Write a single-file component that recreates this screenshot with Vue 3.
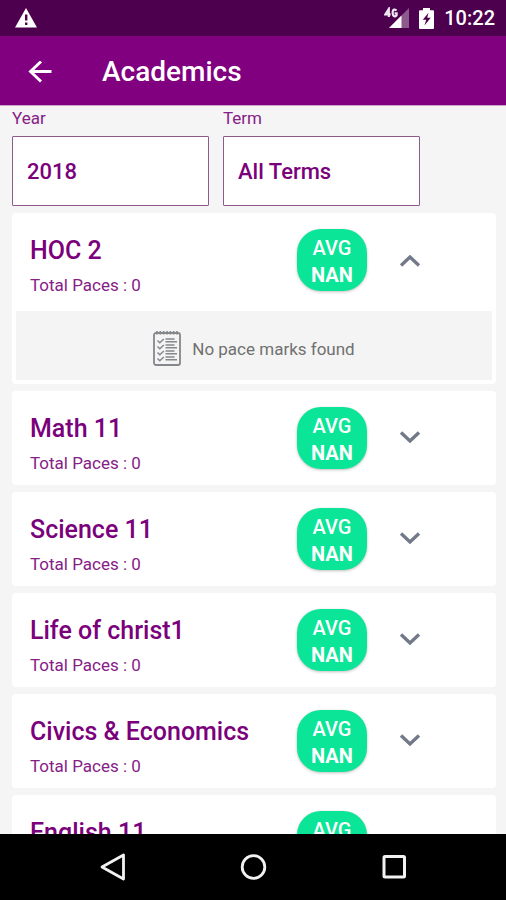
<script setup>
import { ref } from 'vue'

const year = ref('2018')
const term = ref('All Terms')
const openSubject = ref('HOC 2')

const subjects = [
  { name: 'HOC 2', paces: 0 },
  { name: 'Math 11', paces: 0 },
  { name: 'Science 11', paces: 0 },
  { name: 'Life of christ1', paces: 0 },
  { name: 'Civics & Economics', paces: 0 },
  { name: 'English 11', paces: 0 },
]

const noteLines = [9, 15, 21, 27]

function toggle(name) {
  openSubject.value = openSubject.value === name ? '' : name
}
</script>

<template>
  <div class="screen">
    <div class="status-bar">
      <svg class="warning" width="22" height="20" viewBox="0 0 22 20" aria-hidden="true">
        <path d="M11 0 22 19.500H0Z" fill="#fff" />
        <path d="M10 6.500h2.400v6H10zM10 14.500h2.400v2.400H10z" fill="#4d004d" />
      </svg>
      <div class="status-right">
        <svg width="25" height="22" viewBox="0 0 25 22" aria-hidden="true">
          <path d="M25 1V21H5Z" fill="#8d5a8d" />
          <path d="M17.500 8.500V21H5Z" fill="#fff" />
          <g fill="none" stroke="#f0e6f0" stroke-width="2.200">
            <path d="M4.800 10V2L1.400 7.300H6.700" />
            <path d="M12.400 3.600C11.400 1.900 8.600 2 8.600 5.800s3 4.300 4 2.500V6.300h-2" />
          </g>
        </svg>
        <svg width="15" height="21" viewBox="0 0 15 21" aria-hidden="true">
          <path d="M4 0h7v2.200H14q1 0 1 1V20q0 1-1 1H1q-1 0-1-1V3.200q0-1 1-1h3Z" fill="#fff" />
          <path d="M9.500 4.800 3.800 11.800h3.400L5.500 17.500l6.200-7.700H8.200Z" fill="#4d004d" />
        </svg>
        <span class="clock">10:22</span>
      </div>
    </div>

    <header class="app-bar">
      <button class="back" type="button" aria-label="Back">
        <svg width="24" height="22" viewBox="0 0 24 22" aria-hidden="true">
          <path d="M23.500 10.500H2.500M13 0.500 2.500 10.500 13 20.500" fill="none" stroke="#fff" stroke-width="2.900" />
        </svg>
      </button>
      <h1>Academics</h1>
    </header>

    <main class="content">
      <form class="filters">
        <div class="field">
          <label for="year">Year</label>
          <select id="year" v-model="year">
            <option>2018</option>
          </select>
        </div>
        <div class="field">
          <label for="term">Term</label>
          <select id="term" v-model="term">
            <option>All Terms</option>
          </select>
        </div>
      </form>

      <section class="subjects">
        <article v-for="s in subjects" :key="s.name" class="card">
          <div class="card-head">
            <div class="info">
              <h2>{{ s.name }}</h2>
              <p>Total Paces : {{ s.paces }}</p>
            </div>
            <div class="average">
              <span>AVG</span>
              <strong>NAN</strong>
            </div>
            <button
              class="toggle"
              type="button"
              :aria-label="s.name"
              :aria-expanded="openSubject === s.name"
              @click="toggle(s.name)"
            >
              <svg width="22" height="14" viewBox="0 0 22 14" aria-hidden="true">
                <path
                  :d="openSubject === s.name ? 'M2 12.500 11 4l9 8.500' : 'M2 1.500 11 10l9-8.500'"
                  fill="none"
                  stroke="#727988"
                  stroke-width="3.400"
                />
              </svg>
            </button>
          </div>
          <div v-if="openSubject === s.name" class="empty">
            <svg width="28" height="38" viewBox="0 0 28 38" fill="none" stroke="#84888c" aria-hidden="true">
              <rect x="1" y="3" width="26" height="32" rx="2" stroke-width="1.800" />
              <path d="M4 1v3.500M7.300 1v3.500M10.600 1v3.500M14 1v3.500M17.300 1v3.500M20.600 1v3.500M24 1v3.500" stroke-width="1.700" />
              <g v-for="y in noteLines" :key="y" stroke-width="1.500">
                <path :d="`M4.500 ${y + 1.5}l2.300 2.200 4-3.700`" />
                <path :d="`M12.500 ${y}h9M12.500 ${y + 2.7}h11.500`" />
              </g>
            </svg>
            <span>No pace marks found</span>
          </div>
        </article>
      </section>
    </main>

    <nav class="nav-bar">
      <button type="button" aria-label="Back">
        <svg width="28" height="28" viewBox="0 0 28 28" aria-hidden="true">
          <path d="M24.500 2V26L3 14Z" fill="none" stroke="#f2f2f2" stroke-width="2.800" stroke-linejoin="round" />
        </svg>
      </button>
      <button type="button" aria-label="Home">
        <svg width="28" height="28" viewBox="0 0 28 28" aria-hidden="true">
          <circle cx="14.500" cy="14" r="11.300" fill="none" stroke="#f2f2f2" stroke-width="2.800" />
        </svg>
      </button>
      <button type="button" aria-label="Recent apps">
        <svg width="28" height="28" viewBox="0 0 28 28" aria-hidden="true">
          <rect x="5" y="3.500" width="20.500" height="20.500" rx="1" fill="none" stroke="#f2f2f2" stroke-width="3" />
        </svg>
      </button>
    </nav>
  </div>
</template>

<style>
body {
  margin: 0;
}
</style>

<style scoped>
* {
  box-sizing: border-box;
}

.screen {
  display: flex;
  flex-direction: column;
  height: 100vh;
  overflow: hidden;
  background: #f5f5f5;
  color: #7b007b;
  font-family: Roboto, sans-serif;
}

button {
  padding: 0;
  border: 0;
  background: none;
  cursor: pointer;
}

svg {
  display: block;
}

h1,
h2,
p {
  margin: 0;
  font-weight: 500;
}

.status-bar {
  display: flex;
  flex: none;
  align-items: center;
  justify-content: space-between;
  height: 36px;
  padding: 0 11px 0 15px;
  background: #4d004d;
  color: #fff;
}

.status-right {
  display: flex;
  align-items: center;
  gap: 10px;
}

.clock {
  font-size: 20px;
  font-weight: 500;
  line-height: 38px;
}

.app-bar {
  display: flex;
  flex: none;
  align-items: center;
  gap: 50px;
  height: 70px;
  padding: 2px 28px 0;
  border-bottom: 1px solid #c9a6c9;
  background: #800080;
  color: #fff;
}

h1 {
  font-size: 28px;
  line-height: 36px;
}

.content {
  flex: 1;
  min-height: 0;
  overflow: hidden;
  padding: 0 10px 0 12px;
}

.filters {
  display: grid;
  grid-template-columns: 1fr 1fr;
  gap: 14px;
  padding-right: 76px;
}

.field {
  display: flex;
  flex-direction: column;
  gap: 6px;
}

label {
  color: #862086;
  font-size: 17px;
  line-height: 24px;
}

select {
  height: 70px;
  padding: 0 14px;
  border: 1px solid #8d5a8d;
  border-radius: 1px;
  background: #fff;
  color: inherit;
  font-family: inherit;
  font-size: 22px;
  font-weight: 500;
  appearance: none;
}

.subjects {
  display: flex;
  flex-direction: column;
  gap: 7px;
  padding-top: 7px;
}

.card {
  flex: none;
  padding: 0 4px;
  border-radius: 4px;
  background: #fff;
}

.card-head {
  display: grid;
  grid-template-columns: minmax(0, 1fr) 70px 125px;
  align-items: center;
  height: 94px;
  padding-left: 14px;
}

.info {
  padding-top: 15px;
}

h2 {
  font-size: 25px;
  line-height: 36px;
}

p {
  color: #862086;
  font-size: 17px;
  font-weight: 400;
  line-height: 33px;
}

.average {
  display: flex;
  flex-direction: column;
  align-items: center;
  padding: 6px 0 2px;
  border-radius: 24px;
  background: #0ae598;
  box-shadow: 0 1px 3px rgb(0 0 0 / 25%);
  color: #fff;
  font-size: 20px;
  line-height: 27px;
}

.average span {
  font-weight: 500;
}

.average strong {
  font-weight: 700;
}

.toggle {
  display: flex;
  align-items: center;
  padding: 20px 32px;
}

.empty {
  display: flex;
  align-items: center;
  justify-content: center;
  gap: 11px;
  height: 69px;
  margin-top: 4px;
  padding: 6px 2px 0;
  background: #f4f4f4;
  color: #707070;
  font-size: 17px;
}

.card:has(.empty) {
  padding-bottom: 4px;
}

.nav-bar {
  display: grid;
  flex: none;
  grid-template-columns: repeat(3, 140px);
  align-items: center;
  justify-content: center;
  justify-items: center;
  height: 66px;
  background: #000;
}
</style>
